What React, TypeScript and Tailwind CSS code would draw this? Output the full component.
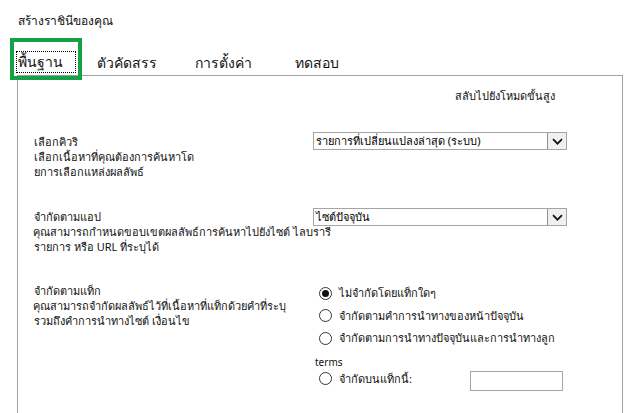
import { useState } from 'react';

const FONT = "font-['Tahoma','Microsoft_Sans_Serif','Noto_Sans','DejaVu_Sans',sans-serif]";

type Option = { id: string; label: string };

const tagOptions: Option[] = [
  { id: 'none', label: 'ไม่จำกัดโดยแท็กใดๆ' },
  { id: 'page', label: 'จำกัดตามคำการนำทางของหน้าปัจจุบัน' },
  { id: 'child', label: 'จำกัดตามการนำทางปัจจุบันและการนำทางลูก' },
];

function FakeSelect({ value }: { value: string }) {
  return (
    <div className="flex h-[18px] w-[254px] items-stretch border border-[#a5a5a5] bg-white">
      <div className="flex-1 truncate pl-[2px] text-[11px] leading-[16px] text-black">{value}</div>
      <div className="flex w-[19px] items-center justify-center border-l border-[#8f8f8f] bg-[#f0f0f0]">
        <svg width="11" height="7" viewBox="0 0 11 7" fill="none">
          <path d="M1 1.2 L5.5 5.7 L10 1.2" stroke="#111" strokeWidth="1.7" />
        </svg>
      </div>
    </div>
  );
}

function Radio({ checked, onClick }: { checked: boolean; onClick: () => void }) {
  return (
    <button
      type="button"
      onClick={onClick}
      className="flex h-[13px] w-[13px] shrink-0 items-center justify-center rounded-full border border-[#333] bg-white">
      {checked ? <span className="h-[7px] w-[7px] rounded-full bg-[#111]" /> : null}
    </button>
  );
}

export default function App() {
  const [tag, setTag] = useState('none');
  const [tab, setTab] = useState(0);
  const tabs = ['พื้นฐาน', 'ตัวคัดสรร', 'การตั้งค่า', 'ทดสอบ'];

  return (
    <div className={`relative h-[413px] w-[627px] overflow-hidden bg-white text-[#111] ${FONT}`}>
      <div className="pl-[18px] pt-[12px] text-[12px] leading-[18px]">สร้างราชินีของคุณ</div>

      {/* tabs */}
      <div className="mt-[16px] flex h-[29px] items-end pb-[2px] pl-[16px] text-[14px]">
        {tabs.map((t, i) => (
          <button
            key={t}
            type="button"
            onClick={() => setTab(i)}
            className={`text-left leading-[20px] ${
              i === 0 ? 'w-[81px]' : i === 1 ? 'w-[98px]' : i === 2 ? 'w-[100px]' : 'w-[60px]'
            }`}>
            <span
              className={`inline-block ${
                i === tab ? 'border border-dotted border-black px-[1px]' : ''
              } ${i === 0 ? 'w-[60px]' : ''}`}>
              {t}
            </span>
          </button>
        ))}
      </div>

      {/* panel */}
      <div className="ml-[17px] h-[340px] w-[606px] border-l border-r border-t border-[#a0a0a0]">
        <div className="mt-[12px] pr-[67px] text-right text-[11px] leading-[16px]">สลับไปยังโหมดขั้นสูง</div>

        <div className="mt-[28px] flex h-[76px]">
          <div className="w-[295px] whitespace-nowrap pl-[16px] pt-[2px] text-[11px] leading-[15px]">
            <div>เลือกคิวริ</div>
            <div>เลือกเนื้อหาที่คุณต้องการค้นหาโด</div>
            <div>ยการเลือกแหล่งผลลัพธ์</div>
          </div>
          <FakeSelect value="รายการที่เปลี่ยนแปลงล่าสุด (ระบบ)" />
        </div>

        <div className="flex h-[74px]">
          <div className="w-[295px] whitespace-nowrap pl-[15px] pt-[1px] text-[11px] leading-[15px]">
            <div className="pl-[1px]">จำกัดตามแอป</div>
            <div>คุณสามารถกำหนดขอบเขตผลลัพธ์การค้นหาไปยังไซต์ ไลบรารี</div>
            <div className="pl-[1px]">รายการ หรือ URL ที่ระบุได้</div>
          </div>
          <FakeSelect value="ไซต์ปัจจุบัน" />
        </div>

        <div className="flex">
          <div className="w-[297px] whitespace-nowrap pl-[15px] pt-[1px] text-[11px] leading-[15px]">
            <div className="pl-[1px]">จำกัดตามแท็ก</div>
            <div>คุณสามารถจำกัดผลลัพธ์ไว้ที่เนื้อหาที่แท็กด้วยคำที่ระบุ</div>
            <div className="pl-[1px]">รวมถึงคำการนำทางไซต์ เงื่อนไข</div>
          </div>
          <div className="flex flex-col text-[11px]">
            {tagOptions.map((o) => (
              <div key={o.id} className="flex h-[22.5px] items-center gap-[7px] whitespace-nowrap pl-[4px]">
                <Radio checked={tag === o.id} onClick={() => setTag(o.id)} />
                <span className="leading-[14px]">{o.label}</span>
              </div>
            ))}
            <div className="mt-[5px] text-[10px] leading-[14px]">terms</div>
            <div className="flex items-start">
              <div className="flex h-[20px] items-center gap-[7px] pl-[4px]">
                <Radio checked={tag === 'this'} onClick={() => setTag('this')} />
                <span className="w-[131px] whitespace-nowrap leading-[14px]">จำกัดบนแท็กนี้:</span>
              </div>
              <input
                type="text"
                className="mt-[2px] h-[20px] w-[93px] border border-[#a5a5a5] bg-white px-1 text-[11px] outline-none"
              />
            </div>
          </div>
        </div>
      </div>

      {/* highlight annotation around the active tab */}
      <div className="pointer-events-none absolute left-[10px] top-[38px] h-[42px] w-[72px] border-4 border-[#16a148]" />
    </div>
  );
}
